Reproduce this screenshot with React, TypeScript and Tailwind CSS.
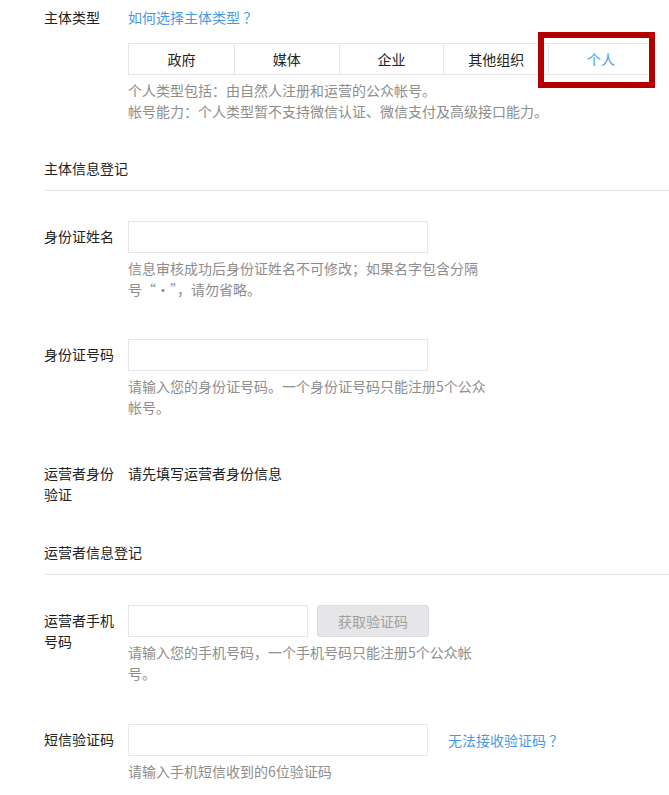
import React from "react";

const font = { fontFamily: '"Microsoft YaHei", "Noto Sans CJK SC", "Liberation Sans", sans-serif' };

const tabs = ["政府", "媒体", "企业", "其他组织", "个人"];

const Label: React.FC<{ children: React.ReactNode }> = ({ children }) => (
  <div className="w-[84px] shrink-0 pr-3 pt-[5px] leading-[21px] text-[#222]">{children}</div>
);

const Hint: React.FC<{ children: React.ReactNode }> = ({ children }) => (
  <p className="mt-[5px] w-[362px] leading-[21px] text-[#8d8d8d]">{children}</p>
);

const TextInput: React.FC<{ width?: string }> = ({ width = "w-[300px]" }) => (
  <input type="text" className={`${width} h-[32px] border border-[#e7e7eb] bg-white px-2 outline-none`} />
);

const SectionTitle: React.FC<{ title: string; mt: string }> = ({ title, mt }) => (
  <div className={`${mt} border-b border-[#e7e7eb] pb-[11px] leading-[21px] text-[#222]`}>{title}</div>
);

export default function App() {
  return (
    <div className="min-h-[795px] w-[669px] overflow-hidden bg-white pl-[44px] text-[14px]" style={font}>
      {/* 主体类型 */}
      <div className="flex pt-[7px]">
        <div className="w-[84px] shrink-0 leading-[21px] text-[#222]">主体类型</div>
        <div className="flex-1">
          <a className="leading-[21px] text-[#459ae9]">如何选择主体类型 ？</a>
          <div className="relative mt-[15px] flex w-[526px] border border-[#e7e7eb]">
            {tabs.map((t, i) => (
              <div
                key={t}
                className={`flex h-[30px] w-[105px] items-center justify-center ${i > 0 ? "border-l border-[#e7e7eb]" : ""} ${
                  t === "个人" ? "text-[#459ae9]" : "text-[#222]"
                }`}
              >
                {t}
              </div>
            ))}
            <div className="absolute left-[409px] top-[-12px] h-[56px] w-[117px] border-[6px] border-[#b50000]" />
          </div>
          <p className="mt-[5px] leading-[21px] text-[#8d8d8d]">个人类型包括：由自然人注册和运营的公众帐号。</p>
          <p className="leading-[21px] text-[#8d8d8d]">帐号能力：个人类型暂不支持微信认证、微信支付及高级接口能力。</p>
        </div>
      </div>

      <SectionTitle title="主体信息登记" mt="mt-[36px]" />

      <div className="mt-[30px] flex">
        <Label>身份证姓名</Label>
        <div>
          <TextInput />
          <Hint>信息审核成功后身份证姓名不可修改；如果名字包含分隔号“·”，请勿省略。</Hint>
        </div>
      </div>

      <div className="mt-[39px] flex">
        <Label>身份证号码</Label>
        <div>
          <TextInput />
          <Hint>请输入您的身份证号码。一个身份证号码只能注册5个公众帐号。</Hint>
        </div>
      </div>

      <div className="mt-[40px] flex">
        <Label>运营者身份验证</Label>
        <div className="pt-[5px] leading-[21px] text-[#222]">请先填写运营者身份信息</div>
      </div>

      <SectionTitle title="运营者信息登记" mt="mt-[37px]" />

      <div className="mt-[30px] flex">
        <Label>运营者手机号码</Label>
        <div>
          <div className="flex gap-[9px]">
            <TextInput width="w-[180px]" />
            <button className="h-[32px] w-[112px] rounded-[3px] border border-[#dadbde] bg-[#e6e6e9] text-[#a0a0a0]">
              获取验证码
            </button>
          </div>
          <Hint>请输入您的手机号码，一个手机号码只能注册5个公众帐号。</Hint>
        </div>
      </div>

      <div className="mt-[40px] flex">
        <Label>短信验证码</Label>
        <div>
          <div className="flex items-center">
            <TextInput />
            <a className="ml-[20px] leading-[21px] text-[#459ae9]">无法接收验证码 ？</a>
          </div>
          <Hint>请输入手机短信收到的6位验证码</Hint>
        </div>
      </div>
    </div>
  );
}
